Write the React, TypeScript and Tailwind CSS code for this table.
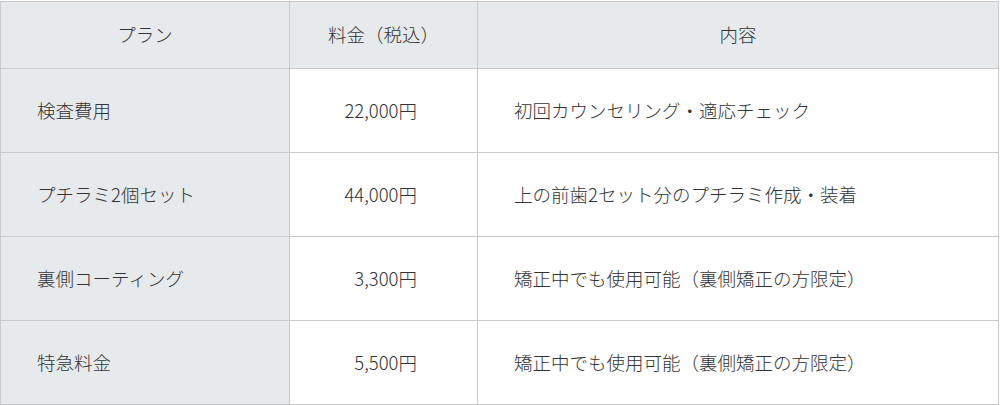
const rows = [
  { plan: "検査費用", price: "22,000円", desc: "初回カウンセリング・適応チェック" },
  { plan: "プチラミ2個セット", price: "44,000円", desc: "上の前歯2セット分のプチラミ作成・装着" },
  { plan: "裏側コーティング", price: "3,300円", desc: "矯正中でも使用可能（裏側矯正の方限定）" },
  { plan: "特急料金", price: "5,500円", desc: "矯正中でも使用可能（裏側矯正の方限定）" },
]

export default function App() {
  return (
    <div className="bg-white pt-px" style={{ fontFamily: '"Noto Sans CJK JP", "Noto Sans", sans-serif' }}>
      <table className="w-[999px] border-collapse text-[18.5px] font-light text-[#333]">
        <thead>
          <tr className="h-[67px] bg-[#e6eaec]">
            <th className="w-[289px] border border-[#c9c9c9] font-light">プラン</th>
            <th className="w-[188px] border border-[#c9c9c9] font-light">料金（税込）</th>
            <th className="border border-[#c9c9c9] font-light">内容</th>
          </tr>
        </thead>
        <tbody>
          {rows.map((r, i) => (
            <tr key={i} className="h-[84px]">
              <td className="border border-[#c9c9c9] bg-[#e6eaec] pl-[36px]">{r.plan}</td>
              <td className="border border-[#c9c9c9] pr-[60px] text-right">{r.price}</td>
              <td className="border border-[#c9c9c9] pl-[36px]">{r.desc}</td>
            </tr>
          ))}
        </tbody>
      </table>
    </div>
  )
}
